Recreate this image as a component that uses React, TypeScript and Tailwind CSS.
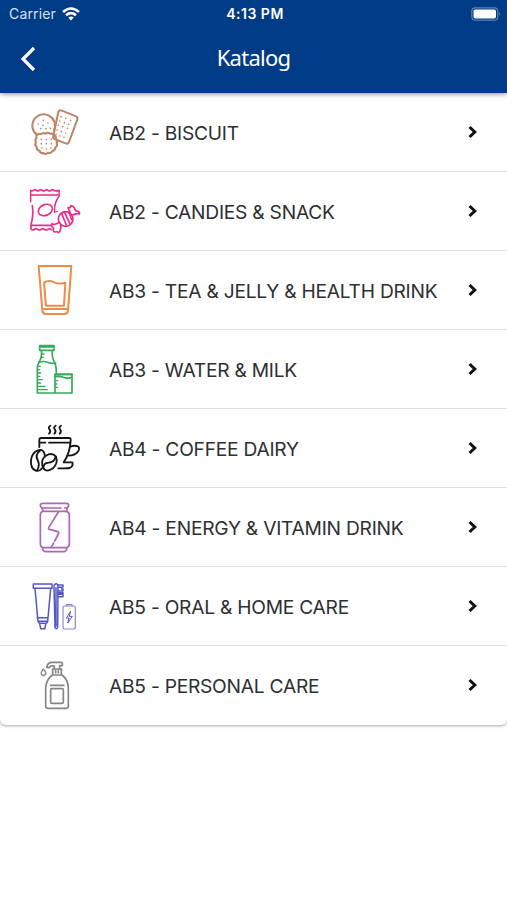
import type { ReactNode } from 'react';

const BiscuitIcon = () => (
  <svg viewBox="0 -3 240 201" className="h-[67px] w-20 text-[#bd8465]" fill="none" stroke="currentColor" strokeWidth="6" strokeLinejoin="round">
    <path d="M124 31 L168 49 Q174 52 172 58 L147 126 Q144 133 137 130 L103 117 Q98 114 100 108 L115 36 Q118 29 124 31 Z" />
    <path d="M101 93 A34 34 0 1 0 52 105" />
    <path d="M52 105 Q57 98 63 103 Q69 96 76 101 Q83 95 90 101 Q98 99 101 106 Q109 108 107 116 Q115 122 110 129 Q114 138 106 143 Q105 152 97 153 Q92 162 84 158 Q76 166 70 159 Q61 161 58 152 Q49 150 50 141 Q42 134 48 127 Q43 118 50 114 Q47 107 52 105 Z" />
    <path
      d="M123 50h.1M137 55h.1M151 61h.1M119 63h.1M133 68h.1M146 73h.1M115 76h.1M128 80h.1M142 85h.1M111 90h.1M124 95h.1M137 99h.1M108 103h.1M120 108h.1M132 112h.1M70 61h.1M55 72h.1M69 76h.1M84 69h.1M62 86h.1M78 86h.1M91 85h.1M64 118h.1M79 118h.1M94 118h.1M64 131h.1M79 131h.1M94 131h.1M66 144h.1M79 147h.1M92 144h.1"
      strokeLinecap="round"
      strokeWidth="5"
    />
  </svg>
);

const CandyIcon = () => (
  <svg viewBox="0 -6 240 201" className="h-[67px] w-20 text-[#ec2a8b]" fill="none" stroke="currentColor" strokeWidth="5" strokeLinecap="round" strokeLinejoin="round">
    <path d="M32 65V31 q6 4 9 0 q6-4 10 0 q5 4 10 0 q5-4 10 0 q5 4 10 0 q5-4 10 0 q5 4 10 0 q5-4 10 0 q4 3 17 0 V48 Q109 72 113 96" transform="translate(3.5 0) scale(.89 1)" />
    <path d="M34 45H116M35 136H92" />
    <path d="M37 77Q41 108 33 134V148 q6 4 10 0 q5-4 10 0 q5 4 10 0 q5-4 10 0 q5 4 10 0 q5-4 11 1" />
    <path d="M104 97L113 94" strokeWidth="3" />
    <ellipse cx="76" cy="90" rx="22" ry="16" transform="rotate(-24 76 90)" />
    <circle cx="137" cy="117" r="22" />
    <path d="M125 101l14 34M134 97l15 33M147 97l8 22" />
    <path d="M150 98L144 83Q151 85 153 77Q161 79 163 84Q165 94 173 93Q180 97 178 102Q169 99 156 106" />
    <path d="M118 127Q106 136 96 131Q91 138 101 145Q97 153 104 156Q112 154 116 158Q124 151 122 136" />
  </svg>
);

const GlassIcon = () => (
  <svg viewBox="0 -3 240 201" className="h-[67px] w-20 text-[#ee8a4a]" fill="none" stroke="currentColor" strokeWidth="6" strokeLinejoin="round">
    <path d="M56 24H154L144 158Q143 168 133 168H78Q68 168 67 158Z" />
    <path d="M72 74Q86 65 103 73Q119 80 136 74L132 143H78Z" />
    <path d="M68 153H143" />
  </svg>
);

const MilkIcon = () => (
  <svg viewBox="0 0 240 201" className="h-[67px] w-20 text-[#35aa58]" fill="none" stroke="currentColor" strokeWidth="5" strokeLinecap="round" strokeLinejoin="round">
    <path d="M59 29H102V43H59ZM62 33H99" />
    <path d="M64 44Q67 64 56 80Q51 88 52 97V171H156V115H105V171M97 44Q95 64 104 80Q109 89 109 113" />
    <path d="M57 79Q69 74 82 79Q94 84 107 81M106 122Q119 119 130 124Q144 129 155 124M105 115H156" />
    <path d="M66 54h6M65 64h5M54 91h7M54 101h5M54 111h8M54 121h6M54 131h13M54 141h8M54 151h21M54 161h28M107 134h6M107 144h4M107 154h6" strokeWidth="4" />
  </svg>
);

const CoffeeIcon = () => (
  <svg viewBox="0 -3 240 201" className="h-[67px] w-20 text-[#151515]" fill="none" stroke="currentColor" strokeWidth="5.5" strokeLinecap="round" strokeLinejoin="round">
    <path d="M91 29q-8 5-2 12q4 6-2 12M107 29q-8 5-2 12q4 6-2 12M123 29q-8 5-2 12q4 6-2 12" />
    <path d="M58 93V72Q58 66 64 66H147Q153 66 152 73Q150 111 132 137" />
    <path d="M60 80H76M87 80H151" />
    <path d="M151 92Q161 88 171 90Q180 93 176 103Q169 119 142 119" />
    <path d="M131 139H157Q161 150 149 156Q142 158 115 157" />
    <path d="M75 119Q72 97 54 103Q36 109 33 132Q31 158 47 164Q59 167 66 157" />
    <path d="M60 104Q44 116 53 132Q61 148 51 163" />
    <path d="M67 148Q63 128 78 119Q96 108 108 122Q115 141 99 157Q81 170 71 158Q67 154 67 148Z" />
    <path d="M70 157Q70 141 86 140Q103 138 107 122" />
  </svg>
);

const EnergyIcon = () => (
  <svg viewBox="0 0 240 201" className="h-[67px] w-20 text-[#ae65b4]" fill="none" stroke="currentColor" strokeWidth="5" strokeLinecap="round" strokeLinejoin="round">
    <path d="M123 42H68Q61 40 61 34Q61 28 68 28H139Q146 28 146 34Q146 40 139 42H134" />
    <path d="M66 43L69 52Q61 55 61 63V150Q61 158 68 161V165Q69 173 77 173H131Q139 173 140 165V161Q148 158 148 150V63Q148 55 139 52L142 43" />
    <path d="M70 52H139M68 161H140" />
    <path d="M115 54L86 101Q84 107 91 107L111 112Q119 114 115 120L104 141M101 147L93 160" />
  </svg>
);

const OralCareIcon = () => (
  <svg viewBox="0 -3 240 201" className="h-[67px] w-20 text-[#5556c5]" fill="none" stroke="currentColor" strokeWidth="4.5" strokeLinecap="round" strokeLinejoin="round">
    <path d="M40 30H96V43H40ZM45 44L54 142H83L92 44M51 131H84M55 142Q56 148 61 148H76Q82 148 83 142M59 149L62 164H75L77 149" />
    <path d="M105 161L102 36Q103 29 109 29Q114 30 114 37L113 160Q109 168 105 161ZM108 41V156" />
    <path d="M114 33H129M114 40H125V45H129V51H114M114 56H129V61H114M114 68H129M129 33V39M129 62V68" />
    <g stroke="#8888ce" strokeWidth="3.5">
      <rect x="129" y="96" width="37" height="69" rx="5" />
      <path d="M139 95V92H156V95" />
    </g>
    <path d="M151 113L139 132H147L143 147L157 127H149Z" strokeWidth="3" />
  </svg>
);

const PersonalCareIcon = () => (
  <svg viewBox="0 0 240 201" className="h-[67px] w-20 text-[#858585]" fill="none" stroke="currentColor" strokeWidth="5" strokeLinecap="round" strokeLinejoin="round">
    <path d="M80 46Q83 32 94 31H125Q128 32 127 41H119V50M80 46L88 47Q90 40 103 42V50" />
    <path d="M98 68V51H124V68M107 56V63M115 56V63" />
    <path d="M97 69H126Q144 82 145 108V162Q145 169 138 169H84Q77 169 77 162V108Q79 82 97 69Z" />
    <path d="M91 100H132" />
    <rect x="92" y="110" width="38" height="44" rx="3" />
    <path d="M70 51Q62 61 64 66Q67 72 73 70Q81 66 76 59Z" strokeWidth="4" />
  </svg>
);

const categories: { label: string; icon: ReactNode }[] = [
  { label: 'AB2 - BISCUIT', icon: <BiscuitIcon /> },
  { label: 'AB2 - CANDIES & SNACK', icon: <CandyIcon /> },
  { label: 'AB3 - TEA & JELLY & HEALTH DRINK', icon: <GlassIcon /> },
  { label: 'AB3 - WATER & MILK', icon: <MilkIcon /> },
  { label: 'AB4 - COFFEE DAIRY', icon: <CoffeeIcon /> },
  { label: 'AB4 - ENERGY & VITAMIN DRINK', icon: <EnergyIcon /> },
  { label: 'AB5 - ORAL & HOME CARE', icon: <OralCareIcon /> },
  { label: 'AB5 - PERSONAL CARE', icon: <PersonalCareIcon /> },
];

function StatusBar() {
  return (
    <div className="grid h-[27px] grid-cols-3 items-center pl-[9px] pr-[6px] font-['Inter',sans-serif] text-white">
      <div className="flex items-center gap-[6px] text-[14px] text-[#d5e2f2]">
        <span className="tracking-[0.15px]">Carrier</span>
        <svg viewBox="0 0 18 14" className="h-[14px] w-[18px]" fill="none" stroke="white" strokeWidth="2.6">
          <path d="M1 5Q9 -2 17 5M4 8.2Q9 4 14 8.2" />
          <path d="M6.2 10.6Q9 8.4 11.8 10.6L9 13.5Z" fill="white" stroke="none" />
        </svg>
      </div>
      <div className="text-center text-[14px] font-semibold tracking-[0.5px]">4:13 PM</div>
      <svg viewBox="0 0 30 14" className="h-[14px] w-[30px] justify-self-end">
        <rect x=".8" y=".8" width="26" height="12.4" rx="3.5" fill="none" stroke="#5c82b3" strokeWidth="1.2" />
        <rect x="2.5" y="2.5" width="22.5" height="9" rx="1.8" fill="white" />
        <path d="M28.2 5Q30 7 28.2 9Z" fill="#6f91bd" />
      </svg>
    </div>
  );
}

export default function App() {
  return (
    <div className="min-h-screen w-full bg-white">
      <header className="relative h-[93px] bg-[#003b85] shadow-[0_1px_5px_rgba(0,0,0,0.45)]">
        <StatusBar />
        <div className="grid h-[62px] grid-cols-3 items-center">
          <button type="button" aria-label="Back" className="ml-5 mt-0.5 w-4">
            <svg viewBox="0 0 16 26" className="h-[26px] w-4" fill="none" stroke="white" strokeWidth="3.2">
              <path d="M14 2L3 13L14 24" />
            </svg>
          </button>
          <h1 className="pb-[3px] text-center font-['Noto_Sans',sans-serif] text-[22px] leading-none tracking-[-0.75px] text-white">Katalog</h1>
        </div>
      </header>

      <main className="overflow-hidden rounded-b-md bg-white shadow-[0_1px_3px_rgba(0,0,0,0.35)]">
        {categories.map(({ label, icon }) => (
          <div key={label} className="flex h-[79px] items-center border-b border-[#dcdfe1] pl-5 pr-[29px] last:border-transparent">
            <div className="shrink-0">{icon}</div>
            <span className="ml-[9px] flex-1 whitespace-nowrap pt-[3px] font-['Inter',sans-serif] text-[19.2px] tracking-[-0.24px] text-[#2d2f31]">{label}</span>
            <svg viewBox="0 0 10 14" className="h-[14px] w-[10px]" fill="none" stroke="#111" strokeWidth="3">
              <path d="M1.5 2L6.8 7L1.5 12" />
            </svg>
          </div>
        ))}
      </main>
    </div>
  );
}
